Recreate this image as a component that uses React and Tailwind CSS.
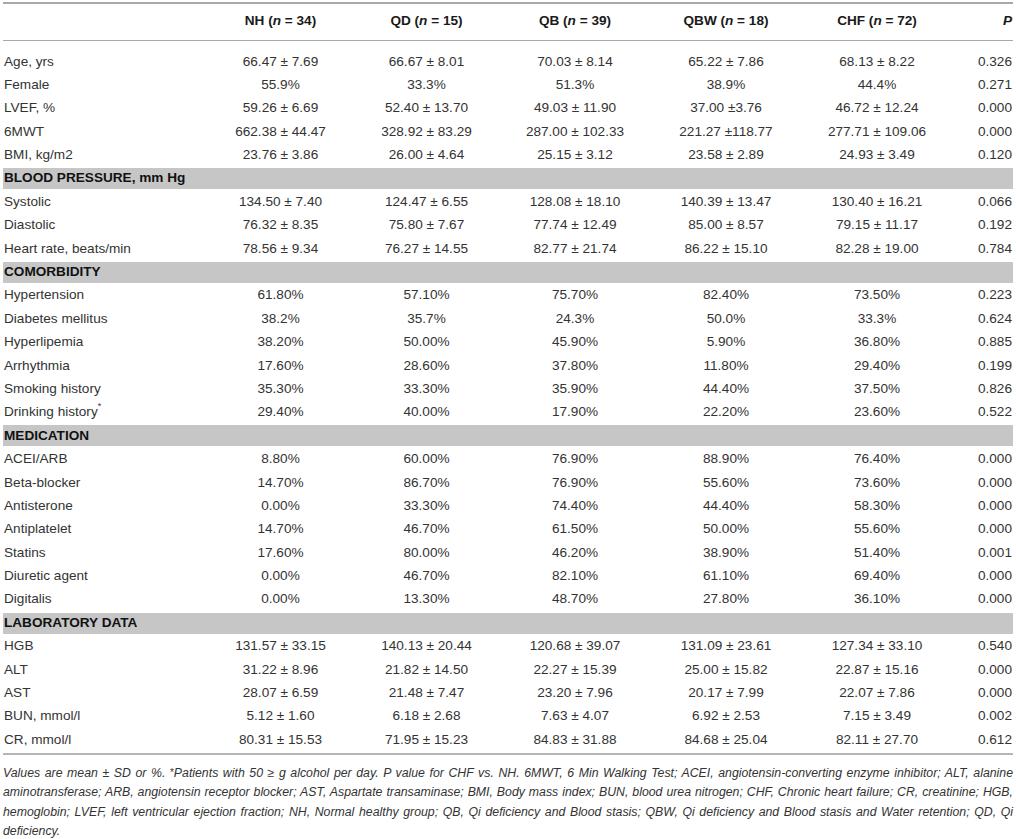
const groups = [
  { name: 'NH', n: 34 },
  { name: 'QD', n: 15 },
  { name: 'QB', n: 39 },
  { name: 'QBW', n: 18 },
  { name: 'CHF', n: 72 },
];

const sections = [
  {
    title: null,
    rows: [
      ['Age, yrs', '66.47 ± 7.69', '66.67 ± 8.01', '70.03 ± 8.14', '65.22 ± 7.86', '68.13 ± 8.22', '0.326'],
      ['Female', '55.9%', '33.3%', '51.3%', '38.9%', '44.4%', '0.271'],
      ['LVEF, %', '59.26 ± 6.69', '52.40 ± 13.70', '49.03 ± 11.90', '37.00 ±3.76', '46.72 ± 12.24', '0.000'],
      ['6MWT', '662.38 ± 44.47', '328.92 ± 83.29', '287.00 ± 102.33', '221.27 ±118.77', '277.71 ± 109.06', '0.000'],
      ['BMI, kg/m2', '23.76 ± 3.86', '26.00 ± 4.64', '25.15 ± 3.12', '23.58 ± 2.89', '24.93 ± 3.49', '0.120'],
    ],
  },
  {
    title: 'BLOOD PRESSURE, mm Hg',
    rows: [
      ['Systolic', '134.50 ± 7.40', '124.47 ± 6.55', '128.08 ± 18.10', '140.39 ± 13.47', '130.40 ± 16.21', '0.066'],
      ['Diastolic', '76.32 ± 8.35', '75.80 ± 7.67', '77.74 ± 12.49', '85.00 ± 8.57', '79.15 ± 11.17', '0.192'],
      ['Heart rate, beats/min', '78.56 ± 9.34', '76.27 ± 14.55', '82.77 ± 21.74', '86.22 ± 15.10', '82.28 ± 19.00', '0.784'],
    ],
  },
  {
    title: 'COMORBIDITY',
    rows: [
      ['Hypertension', '61.80%', '57.10%', '75.70%', '82.40%', '73.50%', '0.223'],
      ['Diabetes mellitus', '38.2%', '35.7%', '24.3%', '50.0%', '33.3%', '0.624'],
      ['Hyperlipemia', '38.20%', '50.00%', '45.90%', '5.90%', '36.80%', '0.885'],
      ['Arrhythmia', '17.60%', '28.60%', '37.80%', '11.80%', '29.40%', '0.199'],
      ['Smoking history', '35.30%', '33.30%', '35.90%', '44.40%', '37.50%', '0.826'],
      ['Drinking history*', '29.40%', '40.00%', '17.90%', '22.20%', '23.60%', '0.522'],
    ],
  },
  {
    title: 'MEDICATION',
    rows: [
      ['ACEI/ARB', '8.80%', '60.00%', '76.90%', '88.90%', '76.40%', '0.000'],
      ['Beta-blocker', '14.70%', '86.70%', '76.90%', '55.60%', '73.60%', '0.000'],
      ['Antisterone', '0.00%', '33.30%', '74.40%', '44.40%', '58.30%', '0.000'],
      ['Antiplatelet', '14.70%', '46.70%', '61.50%', '50.00%', '55.60%', '0.000'],
      ['Statins', '17.60%', '80.00%', '46.20%', '38.90%', '51.40%', '0.001'],
      ['Diuretic agent', '0.00%', '46.70%', '82.10%', '61.10%', '69.40%', '0.000'],
      ['Digitalis', '0.00%', '13.30%', '48.70%', '27.80%', '36.10%', '0.000'],
    ],
  },
  {
    title: 'LABORATORY DATA',
    rows: [
      ['HGB', '131.57 ± 33.15', '140.13 ± 20.44', '120.68 ± 39.07', '131.09 ± 23.61', '127.34 ± 33.10', '0.540'],
      ['ALT', '31.22 ± 8.96', '21.82 ± 14.50', '22.27 ± 15.39', '25.00 ± 15.82', '22.87 ± 15.16', '0.000'],
      ['AST', '28.07 ± 6.59', '21.48 ± 7.47', '23.20 ± 7.96', '20.17 ± 7.99', '22.07 ± 7.86', '0.000'],
      ['BUN, mmol/l', '5.12 ± 1.60', '6.18 ± 2.68', '7.63 ± 4.07', '6.92 ± 2.53', '7.15 ± 3.49', '0.002'],
      ['CR, mmol/l', '80.31 ± 15.53', '71.95 ± 15.23', '84.83 ± 31.88', '84.68 ± 25.04', '82.11 ± 27.70', '0.612'],
    ],
  },
];

const cols = 'grid grid-cols-[205px_145px_147px_150px_152px_150px_1fr] items-center';

const Label = ({ text }) => {
  if (text.endsWith('*')) {
    return (
      <span>
        {text.slice(0, -1)}
        <span className="text-[9px] align-top relative -top-[2px]">*</span>
      </span>
    );
  }
  return <span>{text}</span>;
};

const DataRow = ({ row }) => (
  <div className={`${cols} h-[23.4px]`}>
    <div className="pl-[1px] whitespace-nowrap">
      <Label text={row[0]} />
    </div>
    {row.slice(1, 6).map((v, i) => (
      <div key={i} className="text-center whitespace-nowrap">{v}</div>
    ))}
    <div className="text-right pr-[1px]">{row[6]}</div>
  </div>
);

const SectionBand = ({ title }) => (
  <div className="h-[23.4px] flex items-center">
    <div className="w-full h-[21px] bg-[#c6c6c6] flex items-center pl-[1px] font-bold text-[#111]">
      {title}
    </div>
  </div>
);

const footLines = [
  <>Values are mean ± SD or %. <span className="not-italic text-[10px] align-top relative -top-[1px]">*</span>Patients with 50 ≥ g alcohol per day. P value for CHF vs. NH. 6MWT, 6 Min Walking Test; ACEI, angiotensin-converting enzyme inhibitor; ALT, alanine</>,
  <>aminotransferase; ARB, angiotensin receptor blocker; AST, Aspartate transaminase; BMI, Body mass index; BUN, blood urea nitrogen; CHF, Chronic heart failure; CR, creatinine; HGB,</>,
  <>hemoglobin; LVEF, left ventricular ejection fraction; NH, Normal healthy group; QB, Qi deficiency and Blood stasis; QBW, Qi deficiency and Blood stasis and Water retention; QD, Qi</>,
];

export default function App() {
  return (
    <div className="w-[1016px] h-[839px] bg-white overflow-hidden font-['Liberation_Sans',Arial,sans-serif] text-[13.6px] text-[#333]">
      <div className="mx-[3px] w-[1010px] pt-[2px]">
        <div className="h-[1.5px] bg-[#a9a9a9]" />
        <div className={`${cols} h-[36px] font-bold text-[#1a1a1a]`}>
          <div />
          {groups.map((g) => (
            <div key={g.name} className="text-center whitespace-nowrap">
              {g.name} (<i>n</i> = {g.n})
            </div>
          ))}
          <div className="text-right pr-[1px] italic">P</div>
        </div>
        <div className="h-[1.5px] bg-[#a9a9a9]" />
        <div className="pt-[9px]">
          {sections.map((s, si) => (
            <div key={si}>
              {s.title && <SectionBand title={s.title} />}
              {s.rows.map((r) => (
                <DataRow key={r[0]} row={r} />
              ))}
            </div>
          ))}
        </div>
        <div className="mt-[1px] h-[2px] bg-[#b5b5b5]" />
        <div className="pt-[9px] italic text-[12.3px] leading-[19.5px] text-[#333]">
          {footLines.map((l, i) => (
            <div key={i} className="text-justify [text-align-last:justify]">
              {l}
            </div>
          ))}
          <div>deficiency.</div>
        </div>
      </div>
    </div>
  );
}
